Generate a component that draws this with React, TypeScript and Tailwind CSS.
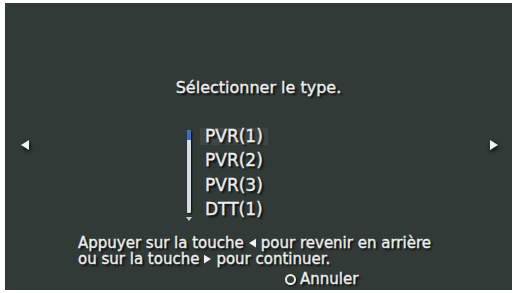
import React from "react";

const shadow = "[text-shadow:2px_2px_2px_rgba(0,0,0,0.85)] [-webkit-text-stroke:0.35px_#ededed]";

function TriLeft({ className = "" }: { className?: string }) {
  return (
    <svg viewBox="0 0 8 10" className={`shrink-0 ${className}`}>
      <polygon points="8,0 8,10 0,5" fill="#f2f2f2" />
    </svg>
  );
}
function TriRight({ className = "" }: { className?: string }) {
  return (
    <svg viewBox="0 0 8 10" className={`shrink-0 ${className}`}>
      <polygon points="0,0 0,10 8,5" fill="#f2f2f2" />
    </svg>
  );
}

export default function App() {
  const items = ["PVR(1)", "PVR(2)", "PVR(3)", "DTT(1)"];
  return (
    <div className="w-[515px] h-[293px] bg-white pt-[3px] pl-[5px]" style={{ fontFamily: '"DejaVu Sans", sans-serif' }}>
      <div className="relative w-[507px] h-[287px] bg-[#323a37] text-[#ededed] flex flex-col">
        {/* side arrows */}
        <TriLeft className="absolute left-[16px] top-[137px] w-[8px] h-[10px] drop-shadow-[1px_2px_2px_rgba(0,0,0,0.9)]" />
        <TriRight className="absolute left-[485px] top-[137px] w-[8px] h-[10px] drop-shadow-[1px_2px_2px_rgba(0,0,0,0.9)]" />

        <div className={`pt-[75px] text-center text-[16px] leading-[20px] ${shadow}`}>Sélectionner le type.</div>

        <div className="mt-[26px] ml-[181px] flex">
          <div className="w-[5px] flex flex-col items-center pt-[6px]">
            <div className="w-[4px] h-[83px] bg-[#d9dde2] rounded-[1px] flex flex-col shadow-[1px_1px_2px_rgba(0,0,0,0.8)]">
              <div className="h-[10px] bg-[#3b6fc4] rounded-t-[1px]" />
            </div>
            <svg viewBox="0 0 6 4" className="w-[6px] h-[4px] mt-[4px]">
              <polygon points="0,0 6,0 3,4" fill="#c9ccd0" />
            </svg>
          </div>
          <div className="ml-[9px] flex flex-col">
            {items.map((it, i) => (
              <div key={it} className="h-[24.3px] flex items-center">
                <div
                  className={`h-[17px] flex items-center px-[5px] text-[17px] leading-[24px] ${shadow} ${
                    i === 0 ? "bg-[#3f4644]" : ""
                  }`}
                >
                  {it}
                </div>
              </div>
            ))}
          </div>
        </div>

        <div className={`mt-[14px] ml-[73px] text-[15px] leading-[16px] ${shadow}`}>
          <div className="flex items-center whitespace-nowrap">
            Appuyer sur la touche
            <TriLeft className="w-[7px] h-[10px] mx-[5px]" />
            pour revenir en arrière
          </div>
          <div className="flex items-center whitespace-nowrap">
            ou sur la touche
            <TriRight className="w-[7px] h-[10px] mx-[5px]" />
            pour continuer.
          </div>
          <div className="flex items-center mt-[4px] ml-[207px]">
            <span className="w-[11px] h-[11px] rounded-full border-[2px] border-[#ededed] mr-[4px] shadow-[1px_1px_2px_rgba(0,0,0,0.8)]" />
            Annuler
          </div>
        </div>
      </div>
    </div>
  );
}
